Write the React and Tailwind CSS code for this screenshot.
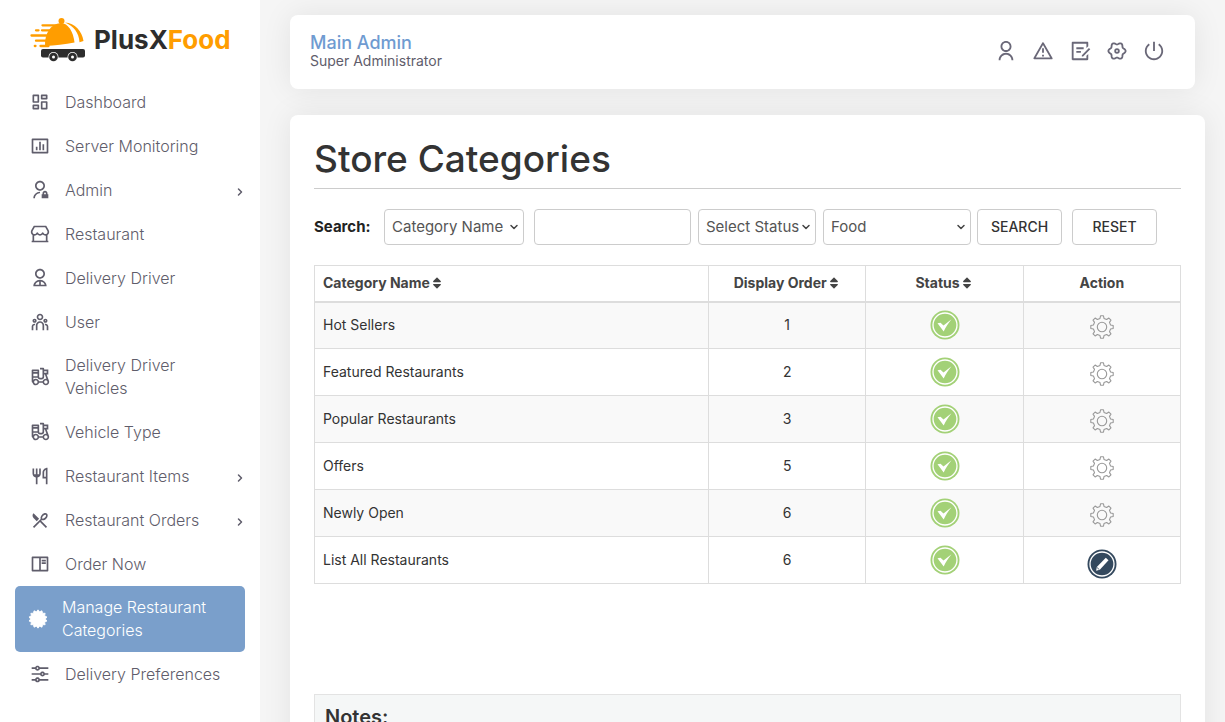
import React, { useState } from 'react';
import {
  RiAdminLine,
  RiAlertLine,
  RiBarChartBoxLine,
  RiBookReadLine,
  RiDashboardLine,
  RiDraftLine,
  RiEqualizerLine,
  RiRestaurant2Line,
  RiRestaurantLine,
  RiShutDownLine,
  RiStore2Line,
  RiTakeawayLine,
  RiTeamLine,
  RiUser2Line,
  RiUserLine,
} from 'react-icons/ri';
import { FaSort } from 'react-icons/fa';
import { ChevronDown, ChevronRight } from 'lucide-react';

const polar = (r, a) => `${(12 + r * Math.sin(a)).toFixed(2)},${(12 - r * Math.cos(a)).toFixed(2)}`;

// closed outline alternating between an outer and an inner radius
const starPoints = (teeth, outer, inner) =>
  Array.from({ length: teeth * 2 }, (_, i) => polar(i % 2 ? inner : outer, (Math.PI * i) / teeth)).join(' ');

// flat-topped teeth, four points for each
const gearPoints = (teeth, outer, inner) =>
  Array.from({ length: teeth }, (_, i) => {
    const a = (2 * Math.PI * i) / teeth;
    return [polar(inner, a - 0.23), polar(outer, a - 0.13), polar(outer, a + 0.13), polar(inner, a + 0.23)].join(' ');
  }).join(' ');

// soft six-lobed outline
const cogPoints = Array.from({ length: 72 }, (_, i) => {
  const a = (Math.PI * i) / 36;
  return polar(8.3 - 1.1 * Math.cos(6 * a), a);
}).join(' ');

const BadgeIcon = ({ className }) => (
  <svg viewBox="0 0 24 24" className={className} fill="currentColor" stroke="currentColor" strokeLinejoin="round">
    <polygon points={starPoints(14, 11, 8.8)} />
  </svg>
);

const CogIcon = ({ className }) => (
  <svg viewBox="0 0 24 24" className={className} fill="none" stroke="currentColor" strokeWidth="2">
    <polygon points={cogPoints} />
    <circle cx="12" cy="12" r="2" />
  </svg>
);

const menu = [
  { label: 'Dashboard', icon: RiDashboardLine },
  { label: 'Server Monitoring', icon: RiBarChartBoxLine },
  { label: 'Admin', icon: RiAdminLine, more: true },
  { label: 'Restaurant', icon: RiStore2Line },
  { label: 'Delivery Driver', icon: RiUser2Line },
  { label: 'User', icon: RiTeamLine },
  { label: 'Delivery Driver Vehicles', icon: RiTakeawayLine },
  { label: 'Vehicle Type', icon: RiTakeawayLine },
  { label: 'Restaurant Items', icon: RiRestaurantLine, more: true },
  { label: 'Restaurant Orders', icon: RiRestaurant2Line, more: true },
  { label: 'Order Now', icon: RiBookReadLine },
  { label: 'Manage Restaurant Categories', icon: BadgeIcon, active: true },
  { label: 'Delivery Preferences', icon: RiEqualizerLine },
];

const tools = [
  { label: 'Profile', icon: RiUserLine },
  { label: 'Alerts', icon: RiAlertLine },
  { label: 'Notes', icon: RiDraftLine },
  { label: 'Settings', icon: CogIcon },
  { label: 'Log out', icon: RiShutDownLine },
];

const rows = [
  { name: 'Hot Sellers', order: 1 },
  { name: 'Featured Restaurants', order: 2 },
  { name: 'Popular Restaurants', order: 3 },
  { name: 'Offers', order: 5 },
  { name: 'Newly Open', order: 6 },
  { name: 'List All Restaurants', order: 6, editable: true },
];

const Logo = () => (
  <a href="#" className="flex items-center gap-2 pl-[30px] pt-[17px]">
    <svg viewBox="0 0 56 46" className="h-[46px] w-14 shrink-0">
      <g fill="#ff9d00">
        <circle cx="31.5" cy="4" r="3" />
        <path d="M15 29C14.500 17 20 7 31 6c7 0 12.500 9 13.500 19.500C35 27.500 25 28.500 15 29z" />
        <path d="M35 5.500c10 .5 17 8.500 18.500 18.500l-4 1.200C49 15.500 43.500 9 35 5.500z" />
      </g>
      <g stroke="#ff9d00" strokeWidth="2.3" strokeLinecap="round">
        <path d="M12.500 8.300H27M6 13.300h2.500M12 13.300h10M1.500 18.500h15M6 23.700h12M4.800 29h.7M10.500 29h8" />
      </g>
      <rect x="11" y="32" width="44" height="8.5" rx="2" fill="#2d2d2d" />
      {[23.5, 42.5].map((x) => (
        <g key={x}>
          <circle cx={x} cy="40" r="5" fill="#fff" />
          <circle cx={x} cy="40" r="4.3" fill="#2d2d2d" />
          <circle cx={x} cy="40" r="1.5" fill="#fff" />
        </g>
      ))}
    </svg>
    <span className="text-[26px] leading-8 font-bold text-[#2d2d2d]">
      PlusX<span className="text-[#ff9d00]">Food</span>
    </span>
  </a>
);

const MenuItem = ({ label, icon: Icon, active, more }) => (
  <li>
    <a
      href="#"
      className={
        active
          ? 'mx-[15px] flex min-h-11 items-center gap-3.5 rounded-[5px] bg-[#7a9fcb] py-2.5 pl-[13px] pr-4 text-white'
          : 'flex min-h-11 items-center gap-[15px] py-2.5 pl-[30px] pr-3.5 text-[#5f5d6b]'
      }
    >
      <Icon className="size-5 shrink-0" />
      <span className={more ? 'flex-1 text-base leading-[23px] font-light' : 'max-w-[160px] text-base leading-[23px] font-light'}>
        {label}
      </span>
      {more && <ChevronRight className="mt-1 size-3" strokeWidth={3} />}
    </a>
  </li>
);

const Dropdown = ({ label, className, children }) => (
  <div className={`relative ${className}`}>
    <select
      aria-label={label}
      className="h-9 w-full appearance-none rounded border border-[#ccc] bg-white pl-[7px] pr-4 text-[15px] text-[#555]"
    >
      {children}
    </select>
    <ChevronDown className="pointer-events-none absolute right-1 top-3 size-3 text-[#444]" strokeWidth={3} />
  </div>
);

const StatusIcon = () => (
  <svg viewBox="0 0 30 30" className="mx-auto size-[30px]" role="img" aria-label="Active">
    <circle cx="15" cy="15" r="14.5" fill="#a3d177" />
    <circle cx="15" cy="15" r="12" fill="none" stroke="#fff" strokeWidth="1.3" />
    <path d="M7.500 13.300l3-.6 3 2.800 8-6.300c-3.200 3.800-5.800 8-7.800 12.300z" fill="#fff" />
  </svg>
);

const GearIcon = () => (
  <svg viewBox="0 0 24 24" className="size-6" fill="none" stroke="#999" strokeWidth="1.1" strokeLinejoin="round">
    <polygon points={gearPoints(8, 11.3, 8.8)} />
    <circle cx="12" cy="12" r="4.7" />
  </svg>
);

const EditIcon = () => (
  <svg viewBox="0 0 30 30" className="size-[30px]">
    <circle cx="15" cy="15" r="14.5" fill="#34495e" />
    <circle cx="15" cy="15" r="12" fill="none" stroke="#fff" strokeWidth="1.3" />
    <path d="M18.800 8.700l2.700 2.500-8.700 9.500-3.700 1 .7-3.600z" fill="#fff" />
    <path d="M9.900 18.400l2.400 2.200" stroke="#34495e" strokeWidth=".8" />
  </svg>
);

const headCell = 'border border-b-2 border-[#ddd] px-2 font-bold';
const cell = 'border border-[#ddd] px-2';

const App = () => {
  const [keyword, setKeyword] = useState('');

  return (
    <div className="flex min-h-screen bg-[#f5f5f5] font-['Inter','Liberation_Sans',sans-serif] text-[#333]">
      <aside className="w-[260px] shrink-0 bg-white">
        <Logo />
        <nav className="pt-[17px]">
          <ul>
            {menu.map((item) => (
              <MenuItem key={item.label} {...item} />
            ))}
          </ul>
        </nav>
      </aside>

      <main className="min-w-0 flex-1 pl-[30px] pr-5 pt-[15px]">
        <header className="mr-2.5 flex items-center justify-between rounded-lg bg-white pb-5 pt-[18px] pl-5 pr-[30px] shadow-[0_0_30px_rgba(0,0,0,0.08)]">
          <div>
            <p className="text-lg leading-5 font-medium text-[#6f9bd1]">Main Admin</p>
            <p className="text-sm leading-4 text-[#5f5d6b]">Super Administrator</p>
          </div>
          <div className="flex gap-[15px]">
            {tools.map(({ label, icon: Icon }) => (
              <button key={label} type="button" aria-label={label} className="text-[#6a6878]">
                <Icon className="size-[22px]" />
              </button>
            ))}
          </div>
        </header>

        <section className="mt-[26px] rounded-lg bg-white px-6 pb-6 pt-6 shadow-[0_0_30px_rgba(0,0,0,0.08)]">
          <h1 className="border-b border-[#ccc] pb-[9px] text-[37px] leading-10 font-medium">Store Categories</h1>

          <form className="mt-5 flex items-center" onSubmit={(e) => e.preventDefault()}>
            <label htmlFor="keyword" className="w-[70px] text-[15px] font-bold text-[#222]">
              Search:
            </label>
            <Dropdown label="Search field" className="w-[140px]">
              <option>Category Name</option>
            </Dropdown>
            <input
              id="keyword"
              type="text"
              value={keyword}
              onChange={(e) => setKeyword(e.target.value)}
              className="ml-2.5 h-9 w-[157px] rounded border border-[#ccc] px-2 text-[15px]"
            />
            <Dropdown label="Status" className="ml-[7px] w-[118px]">
              <option>Select Status</option>
            </Dropdown>
            <Dropdown label="Service" className="ml-[7px] w-[148px]">
              <option>Food</option>
            </Dropdown>
            <button type="submit" className="ml-1.5 h-9 w-[85px] rounded border border-[#ccc] text-sm font-medium">
              SEARCH
            </button>
            <button
              type="reset"
              onClick={() => setKeyword('')}
              className="ml-2.5 h-9 w-[85px] rounded border border-[#ccc] text-sm font-medium"
            >
              RESET
            </button>
          </form>

          <table className="mt-5 w-full table-fixed border-collapse text-sm">
            <thead>
              <tr className="h-9 text-[#444]">
                <th className={`${headCell} w-[45.5%] text-left`}>
                  Category Name
                  <FaSort className="inline size-3.5 align-[-2px]" />
                </th>
                <th className={headCell}>
                  Display Order
                  <FaSort className="inline size-3.5 align-[-2px]" />
                </th>
                <th className={headCell}>
                  Status
                  <FaSort className="inline size-3.5 align-[-2px]" />
                </th>
                <th className={headCell}>Action</th>
              </tr>
            </thead>
            <tbody>
              {rows.map((row) => (
                <tr key={row.name} className="h-[47px] odd:bg-[#f9f9f9]">
                  <td className={cell}>{row.name}</td>
                  <td className={`${cell} text-center`}>{row.order}</td>
                  <td className={cell}>
                    <StatusIcon />
                  </td>
                  <td className={cell}>
                    <button
                      type="button"
                      aria-label={`Edit ${row.name}`}
                      className={row.editable ? 'mx-auto mt-2 block' : 'mx-auto mt-1 block'}
                    >
                      {row.editable ? <EditIcon /> : <GearIcon />}
                    </button>
                  </td>
                </tr>
              ))}
            </tbody>
          </table>

          <div className="mt-[110px] border border-[#e3e3e3] bg-[#f5f7f7] p-2.5">
            <h2 className="text-xl leading-6 font-semibold">Notes:</h2>
          </div>
        </section>
      </main>
    </div>
  );
};

export default App;
